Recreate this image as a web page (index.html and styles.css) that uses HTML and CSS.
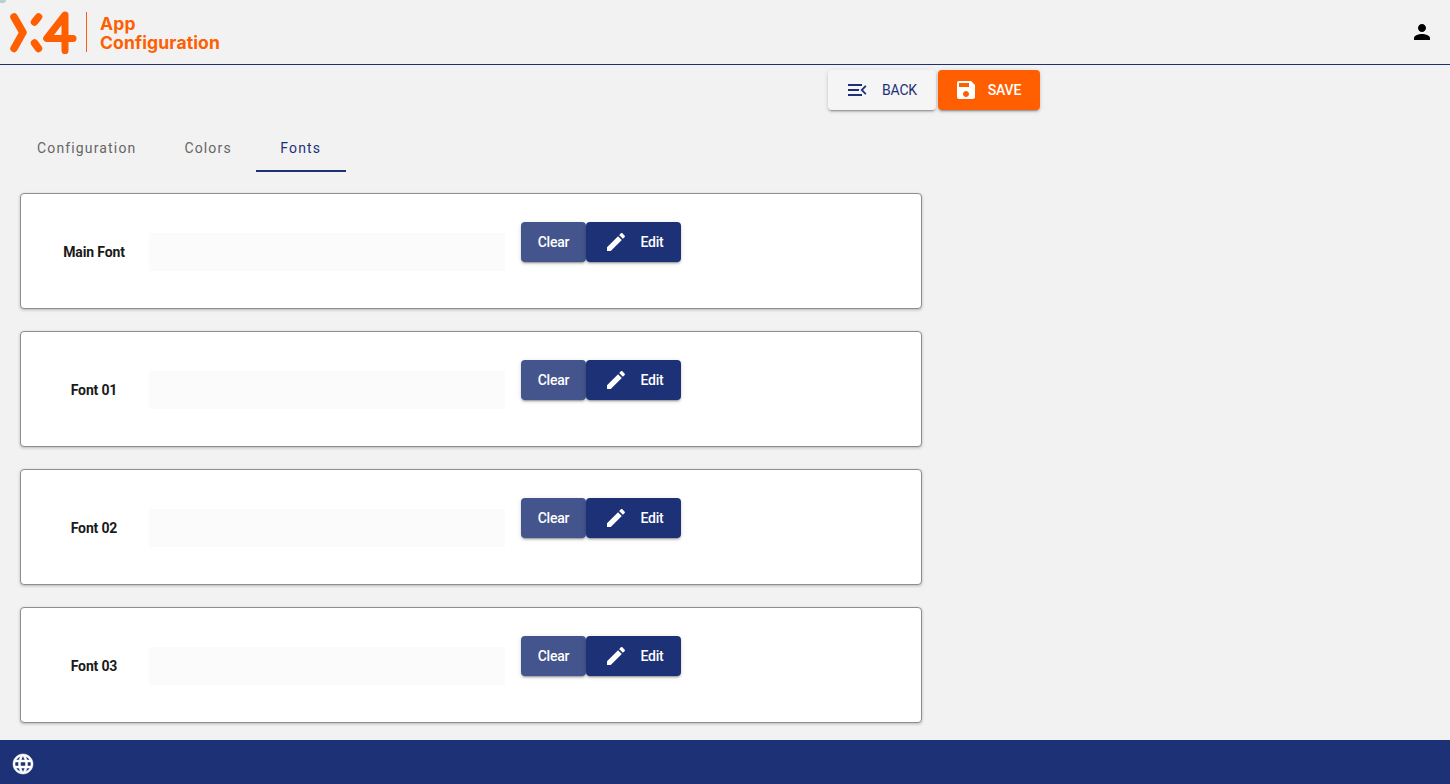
FILE: index.html
```html
<!DOCTYPE html>
<html lang="en">
<head>
<meta charset="utf-8">
<title>App Configuration</title>
<link rel="stylesheet" href="styles.css">
</head>
<body>
<div class="app">
  <header class="topbar">
    <div class="logo">
      <svg class="logo-mark" width="68" height="44" viewBox="0 0 68 44">
        <g fill="none" stroke="#ff5f00" stroke-linecap="round" stroke-linejoin="round">
          <path stroke-width="7.500" d="M5 7 L14 22.500 L5 38.500"/>
          <path stroke-width="7.500" d="M29.500 7 L25.500 12"/>
          <path stroke-width="7.500" d="M29.500 38.500 L25.500 33"/>
          <path stroke-width="7" d="M56 40.700 V5 L37.700 28.500 H64"/>
        </g>
      </svg>
      <span class="logo-rule"></span>
      <div class="logo-text"><span>App</span><span>Configuration</span></div>
    </div>
    <svg class="user-icon" width="24" height="24" viewBox="0 0 24 24"><path fill="#000" d="M12 12c2.210 0 4-1.790 4-4s-1.790-4-4-4-4 1.790-4 4 1.790 4 4 4zm0 2c-2.670 0-8 1.340-8 4v2h16v-2c0-2.660-5.330-4-8-4z"/></svg>
  </header>

  <main class="content">
    <div class="actions">
      <button class="btn btn-back">
        <svg width="24" height="24" viewBox="0 0 24 24"><path fill="#1d3177" d="M3 6h14v2H3zM3 11h11v2H3zM3 16h14v2H3zM21.500 8.400 18 12l3.500 3.600-1.300 1.200L15.500 12l4.700-4.800z"/></svg>
        <span>BACK</span>
      </button>
      <button class="btn btn-save">
        <svg width="24" height="24" viewBox="0 0 24 24"><path fill="#fff" d="M17 3H5c-1.110 0-2 .9-2 2v14c0 1.100.89 2 2 2h14c1.100 0 2-.9 2-2V7l-4-4zm-5 16c-1.660 0-3-1.340-3-3s1.340-3 3-3 3 1.340 3 3-1.340 3-3 3zm3-10H5V5h10v4z"/></svg>
        <span>SAVE</span>
      </button>
    </div>

    <nav class="tabs">
      <a class="tab">Configuration</a>
      <a class="tab">Colors</a>
      <a class="tab tab-active">Fonts</a>
    </nav>

    <section class="cards">
      <div class="card">
        <div class="card-label">Main Font</div>
        <div class="font-field"></div>
        <div class="card-buttons">
          <button class="btn btn-clear">Clear</button>
          <button class="btn btn-edit"><svg width="24" height="24" viewBox="0 0 24 24"><path fill="#fff" d="M3 17.250V21h3.750L17.810 9.940l-3.750-3.750L3 17.250zM20.710 7.040c.39-.39.39-1.020 0-1.410l-2.340-2.340c-.39-.39-1.020-.39-1.410 0l-1.830 1.830 3.750 3.750 1.830-1.830z"/></svg><span>Edit</span></button>
        </div>
      </div>
      <div class="card">
        <div class="card-label">Font 01</div>
        <div class="font-field"></div>
        <div class="card-buttons">
          <button class="btn btn-clear">Clear</button>
          <button class="btn btn-edit"><svg width="24" height="24" viewBox="0 0 24 24"><path fill="#fff" d="M3 17.250V21h3.750L17.810 9.940l-3.750-3.750L3 17.250zM20.710 7.040c.39-.39.39-1.020 0-1.410l-2.340-2.340c-.39-.39-1.020-.39-1.410 0l-1.830 1.830 3.750 3.750 1.830-1.830z"/></svg><span>Edit</span></button>
        </div>
      </div>
      <div class="card">
        <div class="card-label">Font 02</div>
        <div class="font-field"></div>
        <div class="card-buttons">
          <button class="btn btn-clear">Clear</button>
          <button class="btn btn-edit"><svg width="24" height="24" viewBox="0 0 24 24"><path fill="#fff" d="M3 17.250V21h3.750L17.810 9.940l-3.750-3.750L3 17.250zM20.710 7.040c.39-.39.39-1.020 0-1.410l-2.340-2.340c-.39-.39-1.020-.39-1.410 0l-1.830 1.830 3.750 3.750 1.830-1.830z"/></svg><span>Edit</span></button>
        </div>
      </div>
      <div class="card">
        <div class="card-label">Font 03</div>
        <div class="font-field"></div>
        <div class="card-buttons">
          <button class="btn btn-clear">Clear</button>
          <button class="btn btn-edit"><svg width="24" height="24" viewBox="0 0 24 24"><path fill="#fff" d="M3 17.250V21h3.750L17.810 9.940l-3.750-3.750L3 17.250zM20.710 7.040c.39-.39.39-1.020 0-1.410l-2.340-2.340c-.39-.39-1.020-.39-1.410 0l-1.830 1.830 3.750 3.750 1.830-1.830z"/></svg><span>Edit</span></button>
        </div>
      </div>
    </section>
  </main>

  <footer class="footer">
    <svg width="24" height="24" viewBox="0 0 24 24"><path fill="#fff" stroke="#fff" stroke-width=".5" d="M11.990 2C6.470 2 2 6.480 2 12s4.470 10 9.990 10C17.520 22 22 17.520 22 12S17.520 2 11.990 2zm6.930 6h-2.950c-.32-1.250-.78-2.450-1.380-3.560 1.840.63 3.370 1.910 4.330 3.560zM12 4.040c.83 1.200 1.480 2.530 1.910 3.960h-3.820c.43-1.430 1.080-2.760 1.910-3.960zM4.260 14C4.100 13.360 4 12.690 4 12s.1-1.360.26-2h3.380c-.08.660-.14 1.320-.14 2s.06 1.340.14 2H4.260zm.82 2h2.950c.32 1.250.78 2.450 1.380 3.560-1.840-.63-3.370-1.900-4.330-3.560zm2.950-8H5.080c.96-1.660 2.490-2.930 4.330-3.560C8.810 5.550 8.350 6.750 8.030 8zM12 19.960c-.83-1.200-1.480-2.530-1.910-3.960h3.820c-.43 1.430-1.080 2.760-1.910 3.960zM14.340 14H9.660c-.09-.66-.16-1.320-.16-2s.07-1.350.16-2h4.680c.09.650.16 1.320.16 2s-.07 1.340-.16 2zm.25 5.560c.6-1.110 1.060-2.310 1.380-3.560h2.950c-.96 1.650-2.490 2.930-4.330 3.560zM16.360 14c.08-.66.14-1.320.14-2s-.06-1.340-.14-2h3.380c.16.640.26 1.310.26 2s-.1 1.360-.26 2h-3.380z"/></svg>
  </footer>
</div>
</body>
</html>
```

FILE: styles.css
```css
* { box-sizing: border-box; }
html, body { margin: 0; height: 100%; overflow: hidden; }
body { font-family: "Roboto", "Liberation Sans", sans-serif; background: #f2f2f2; color: #1a1a1a; }
.app { display: flex; flex-direction: column; height: 784px; }

.topbar { position: relative; height: 65px; flex: none; display: flex; align-items: center; justify-content: space-between; padding: 0 16px 0 9px; border-bottom: 1px solid #1d3177; }
.topbar::before { content: ""; position: absolute; top: 0; left: 0; width: 6px; height: 3px; background: #b9cfcf; border-bottom-right-radius: 4px; }
.logo { display: flex; align-items: center; }
.logo-mark { display: block; }
.logo-rule { width: 1px; height: 40px; background: #ff5f00; margin-left: 9px; margin-right: 13px; }
.logo-text { display: flex; flex-direction: column; font-family: "Inter", sans-serif; font-weight: 700; font-size: 17.500px; line-height: 19px; color: #ff5f00; letter-spacing: 0.140px; margin-top: 2px; }
.user-icon { display: block; }

.content { flex: 1; min-height: 0; display: flex; flex-direction: column; }
.actions { display: flex; gap: 2px; padding: 5px 0 0 828px; height: 45px; flex: none; }

.btn { border: 0; border-radius: 4px; height: 40px; display: inline-flex; align-items: center; justify-content: center; font-family: inherit; font-size: 14px; letter-spacing: -0.200px; font-weight: 500; box-shadow: 0 3px 1px -2px rgba(0,0,0,.2), 0 2px 2px 0 rgba(0,0,0,.14), 0 1px 5px 0 rgba(0,0,0,.12); padding: 0; }
.btn svg { display: block; flex: none; }
.btn-back { width: 108px; background: #f5f5f5; color: #1d3177; gap: 13px; font-weight: 400; padding-right: 2px; }
.btn-save { width: 102px; background: #ff5f00; color: #fff; gap: 10px; padding-right: 3px; }

.tabs { display: flex; height: 48px; margin: 14px 0 21px 13px; flex: none; }
.tab { min-width: 90px; padding: 0 24px; display: flex; align-items: center; justify-content: center; font-size: 14px; font-weight: 400; letter-spacing: 1.150px; color: #666; height: 48px; }
.tab-active { color: #1d3177; border-bottom: 2px solid #1d3177; padding-top: 2px; }

.cards { display: flex; flex-direction: column; gap: 22px; margin-left: 20px; width: 902px; }
.card { height: 116px; background: #fff; border: 1px solid #8e8e8e; border-radius: 4px; box-shadow: 0 1px 3px rgba(0,0,0,.25); display: flex; align-items: flex-start; }
.card-label { width: 128px; height: 114px; display: flex; align-items: center; justify-content: center; margin-top: 1px; font-size: 14px; letter-spacing: -0.150px; font-weight: 700; color: #1a1a1a; white-space: nowrap; flex: none; padding-left: 18px; }
.font-field { width: 356px; height: 38px; margin-top: 39px; background: #fbfbfb; flex: none; }
.card-buttons { display: flex; margin: 28px 0 0 16px; }
.btn-clear { width: 65px; background: #44548d; color: #fff; }
.btn-edit { width: 95px; background: #1d3177; color: #fff; gap: 12px; padding-left: 1px; }

.footer { height: 44px; flex: none; background: #1d3177; display: flex; align-items: center; padding: 4px 0 0 11px; }
```
